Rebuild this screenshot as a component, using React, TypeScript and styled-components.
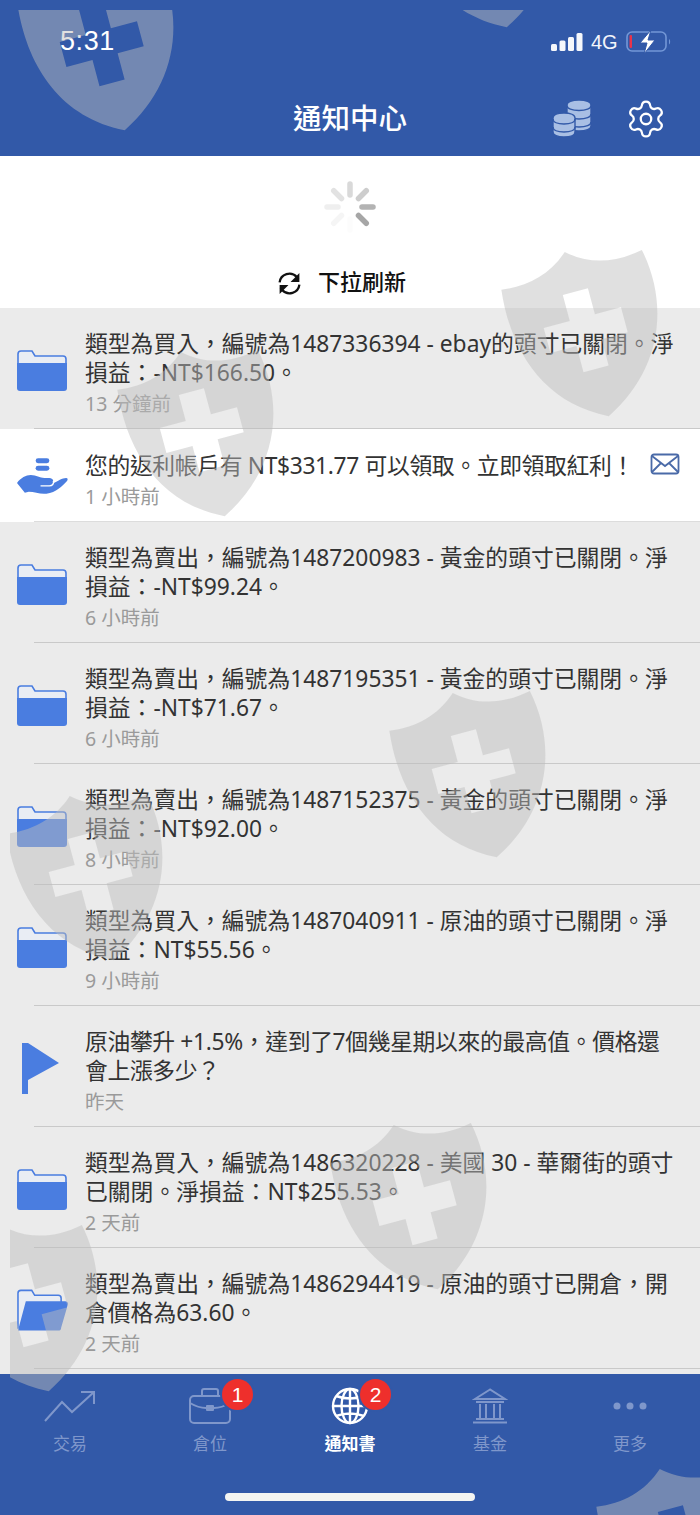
import * as React from "react";
import styled, { createGlobalStyle } from "styled-components";
import { Settings } from "lucide-react";

const GlobalStyle = createGlobalStyle`
  html, body {
    margin: 0;
    padding: 0;
    background: #ebebeb;
  }
  * {
    box-sizing: border-box;
  }
`;

const BLUE = "#3259a8";
const ICON_BLUE = "#4a7de0";
const TAB_MUTED = "#7f97cb";

const Page = styled.div`
  position: relative;
  width: 700px;
  height: 1515px;
  display: flex;
  flex-direction: column;
  overflow: hidden;
  font-family: "Liberation Sans", "Noto Sans CJK TC", sans-serif;
`;

const Header = styled.header`
  height: 156px;
  flex: none;
  background: ${BLUE};
  color: #fff;
  display: flex;
  flex-direction: column;
`;

const StatusBar = styled.div`
  height: 82px;
  padding: 22px 28px 0 60px;
  display: flex;
  justify-content: space-between;
  align-items: flex-start;
`;

const Clock = styled.span`
  font-size: 27px;
  line-height: 38px;
  letter-spacing: 0.6px;
`;

const StatusIcons = styled.div`
  display: flex;
  align-items: center;
  height: 40px;
  gap: 8px;
`;

const NetworkLabel = styled.span`
  font-size: 20px;
  width: 27px;
  color: #f2f5fb;
`;

const NavBar = styled.div`
  display: grid;
  grid-template-columns: 1fr auto 1fr;
  align-items: center;
  height: 72px;
  padding: 2px 33px 0;
`;

const Title = styled.h1`
  grid-column: 2;
  margin: 0;
  font-size: 28.5px;
  font-weight: 500;
  line-height: 70px;
`;

const NavActions = styled.div`
  grid-column: 3;
  justify-self: end;
  display: flex;
  align-items: center;
  gap: 33px;
`;

const RefreshPanel = styled.section`
  height: 152px;
  flex: none;
  background: #fff;
  display: flex;
  flex-direction: column;
  align-items: center;
`;

const SpinnerSlot = styled.div`
  height: 103px;
  padding-top: 23px;
`;

const PullHint = styled.div`
  display: flex;
  align-items: center;
  gap: 16px;
  margin-right: 17px;
  font-size: 22px;
  font-weight: 500;
  line-height: 48px;
  color: #111;
`;

const List = styled.div`
  flex: 1;
  min-height: 0;
  background: #ebebeb;
  display: flex;
  flex-direction: column;
`;

const Row = styled.article<{ $read: boolean }>`
  background: ${props => (props.$read ? "#ebebeb" : "#fff")};
`;

const RowBody = styled.div`
  min-height: 92px;
  display: grid;
  grid-template-columns: 51px 1fr auto;
  column-gap: 17px;
  align-items: center;
  padding: 21px 20px 10px 17px;
`;

const RowIcon = styled.div`
  display: flex;
  align-items: center;
  margin-top: -7px;
`;

const Message = styled.div`
  min-width: 0;
  color: #333;
  font-family: "Noto Sans", "Noto Sans CJK TC", sans-serif;
  font-size: 22.8px;
  line-height: 29px;
`;

const MessageLine = styled.div<{ $tight: boolean }>`
  white-space: nowrap;
  letter-spacing: ${props => (props.$tight ? "-0.35px" : "0")};
`;

const TimeAgo = styled.div`
  margin-top: 3px;
  color: #9a9a9a;
  font-size: 19.5px;
  line-height: 28px;
`;

const MailSlot = styled.div`
  align-self: start;
  margin-top: 3px;
`;

const Divider = styled.div<{ $light: boolean }>`
  height: 1px;
  margin-left: 34px;
  background: ${props => (props.$light ? "#dcdcdc" : "#c9c9c9")};
`;

const TabBar = styled.nav`
  height: 141px;
  flex: none;
  background: ${BLUE};
  display: flex;
  flex-direction: column;
  align-items: center;
`;

const Tabs = styled.div`
  width: 100%;
  display: grid;
  grid-template-columns: repeat(5, 140px);
`;

const Tab = styled.div<{ $active: boolean }>`
  height: 119px;
  padding-top: 10px;
  display: flex;
  flex-direction: column;
  align-items: center;
  font-size: 17px;
  font-weight: ${props => (props.$active ? 700 : 400)};
  color: ${props => (props.$active ? "#fff" : TAB_MUTED)};
`;

const TabIcon = styled.div`
  position: relative;
  height: 44px;
  display: flex;
  align-items: center;
  justify-content: center;
`;

const TabLabel = styled.span`
  margin-top: 5px;
  line-height: 24px;
`;

const Badge = styled.span`
  position: absolute;
  top: -5px;
  left: 100%;
  margin-left: -9px;
  width: 31px;
  height: 31px;
  border-radius: 50%;
  background: #ee2f2c;
  box-shadow: 0 0 0 2px ${BLUE};
  color: #fff;
  font-size: 21px;
  font-weight: 400;
  display: flex;
  align-items: center;
  justify-content: center;
`;

const HomeIndicator = styled.div`
  width: 250px;
  height: 8px;
  border-radius: 4px;
  background: #f4f5f2;
`;

// watermark sits over everything and is clipped 10px in from the top left
const Watermark = styled.div`
  position: absolute;
  top: 10px;
  left: 10px;
  right: 0;
  bottom: 0;
  overflow: hidden;
  pointer-events: none;
`;

const ShieldMark = styled.svg<{ $x: number; $y: number }>`
  position: absolute;
  width: 172px;
  height: 180px;
  left: ${props => props.$x - 90}px;
  top: ${props => props.$y - 100}px;
  transform-origin: 80px 90px;
  transform: rotate(-15deg);
  fill: rgba(189, 189, 189, 0.47);
`;

const shieldCentres = [
  [103, 49],
  [485, -54],
  [587, 335],
  [203, 435],
  [475, 776],
  [92, 879],
  [416, 1208],
  [27, 1310],
  [682, 1552]
];

const ClosedFolder = () => (
  <svg width="50" height="42" viewBox="0 0 50 42">
    <path
      d="M1 5a3 3 0 0 1 3-3h11l3 5h28a3 3 0 0 1 3 3v5H1z"
      fill="#e9edf4"
      stroke={ICON_BLUE}
      strokeWidth="1.6"
    />
    <path
      d="M0 14h50v25a3 3 0 0 1-3 3H3a3 3 0 0 1-3-3z"
      fill={ICON_BLUE}
    />
  </svg>
);

const OpenFolder = () => (
  <svg width="52" height="42" viewBox="0 0 52 42">
    <path
      d="M1 40V4a3 3 0 0 1 3-3h11l3 5h24a3 3 0 0 1 3 3v4"
      fill="#e9edf4"
      stroke={ICON_BLUE}
      strokeWidth="1.6"
    />
    <path d="M9 12h40a3 3 0 0 1 3 3l-7 24a3 3 0 0 1-3 3H1z" fill={ICON_BLUE} />
  </svg>
);

const FlagIcon = () => (
  <svg width="42" height="51" viewBox="0 0 42 51">
    <path d="M5 0h6l31 20L11 37v14H5z" fill={ICON_BLUE} />
  </svg>
);

const HandCoins = () => (
  <svg width="52" height="38" viewBox="0 0 52 38">
    <rect x="19" y="0" width="14" height="5" rx="2.5" fill={ICON_BLUE} />
    <rect x="19" y="7.5" width="14" height="5" rx="2.5" fill={ICON_BLUE} />
    <path
      d="M0 25C4 20 9 17 14 17C20 17 23 20 28 20H33C37 20 38 24 36 26C42 23 46 20 50 20C52 20 52 22 51 23C46 28 40 35 30 36C24 37 18 34 12 34L8 35Z"
      fill={ICON_BLUE}
    />
    <path d="M24 28h9c3 0 5-2 4-5" fill="none" stroke="#fff" strokeWidth="1.4" />
  </svg>
);

const MailIcon = () => (
  <svg width="30" height="22" viewBox="0 0 30 22" fill="none" stroke="#4a6aa8" strokeWidth="1.8">
    <rect x="1.5" y="1.5" width="27" height="19" rx="2.5" />
    <path d="M2 3l13 10L28 3M2 19l9-9M28 19l-9-9" />
  </svg>
);

const SignalBars = () => (
  <svg width="32" height="20" viewBox="0 0 32 20" fill="#f5f7fb">
    <rect x="0" y="12" width="6" height="7" rx="1.5" />
    <rect x="8.5" y="8.5" width="6" height="10.5" rx="1.5" />
    <rect x="17" y="5" width="6" height="14" rx="1.5" />
    <rect x="25.5" y="1" width="6" height="18" rx="1.5" />
  </svg>
);

const Battery = () => (
  <svg width="46" height="24" viewBox="0 0 46 24">
    <rect x="1" y="2" width="39" height="19" rx="5" fill="none" stroke="#7397d6" strokeWidth="1.6" />
    <rect x="3.5" y="5" width="2.5" height="13" rx="1" fill="#e8334a" />
    <path d="M43 9c1.5.6 1.5 4.8 0 5.4z" fill="#7397d6" />
    <path d="M25 0L14 13h7l-3 11 11-14h-7z" fill="#fff" stroke={BLUE} strokeWidth="1" />
  </svg>
);

const CoinsIcon = () => (
  <svg width="40" height="38" viewBox="0 0 40 38" fill="#a9bfe4" stroke={BLUE} strokeWidth="1.4">
    <path d="M15 5c0-3 5-5 12-5s12 2 12 5v21c0 3-5 5-12 5s-12-2-12-5z" />
    <path d="M15 5.500c0 3 5 5 12 5s12-2 12-5M15 14c0 3 5 5 12 5s12-2 12-5M15 22c0 3 5 5 12 5s12-2 12-5" fill="none" />
    <path d="M1 18c0-3 4.500-5 11-5s11 2 11 5v14c0 3-4.500 5-11 5S1 35 1 32z" />
    <path d="M1 19c0 3 4.500 5 11 5s11-2 11-5M1 27c0 3 4.500 5 11 5s11-2 11-5" fill="none" />
  </svg>
);

const RefreshIcon = () => (
  <svg width="25" height="25" viewBox="0 0 24 24" fill="none" stroke="#111" strokeWidth="2.2">
    <path d="M2.500 11A9.500 9.500 0 0 1 19 5.800l1.500 2" />
    <path d="M21.500 2v8.500H13z" fill="#111" stroke="none" />
    <path d="M21.500 13A9.500 9.500 0 0 1 5 18.200l-1.500-2" />
    <path d="M2.500 22v-8.500H11z" fill="#111" stroke="none" />
  </svg>
);

const Spinner = () => (
  <svg width="56" height="56" viewBox="-28 -28 56 56" strokeWidth="5.500" strokeLinecap="round">
    {[
      [0, "#d9d9d9"],
      [45, "#cdcdcd"],
      [90, "#b3b3b3"],
      [135, "#a6a6a6"],
      [180, "#fcfcfc"],
      [225, "#f5f5f5"],
      [270, "#efefef"],
      [315, "#e2e2e2"]
    ].map(([angle, colour]) => (
      <line
        key={angle}
        x1="0"
        y1="-12"
        x2="0"
        y2="-23"
        stroke={colour as string}
        transform={`rotate(${angle})`}
      />
    ))}
  </svg>
);

const TradeGlyph = () => (
  <svg width="52" height="32" viewBox="0 0 52 32" fill="none" stroke={TAB_MUTED} strokeWidth="2">
    <path d="M1 31L18 12l10 10L50 2M37 2h13v12" />
  </svg>
);

const CaseGlyph = () => (
  <svg width="42" height="36" viewBox="0 0 42 36" fill="none" stroke={TAB_MUTED} strokeWidth="2">
    <rect x="1" y="8" width="40" height="27" rx="4" />
    <path d="M13 8V3a2 2 0 0 1 2-2h12a2 2 0 0 1 2 2v5M1 15c5 3 10 5 16 5M25 20c6 0 11-2 16-5" />
    <rect x="17" y="17" width="8" height="6" rx="1" fill={TAB_MUTED} stroke="none" />
  </svg>
);

const GlobeGlyph = () => (
  <svg width="38" height="38" viewBox="0 0 38 38" fill="none" stroke="#fff" strokeWidth="2.4">
    <circle cx="19" cy="19" r="17" />
    <ellipse cx="19" cy="19" rx="8.500" ry="17" />
    <path d="M19 2v34M2 19h34M5 9Q19 14 33 9M5 29Q19 24 33 29" />
  </svg>
);

const BankGlyph = () => (
  <svg width="36" height="36" viewBox="0 0 36 36" fill="none" stroke={TAB_MUTED} strokeWidth="2">
    <path d="M18 1.500L3 11h30zM4 14h28M8 16v14M14 16v14M22 16v14M28 16v14M4 31h28M1 34.500h34" />
  </svg>
);

const MoreGlyph = () => (
  <svg width="36" height="10" viewBox="0 0 36 10" fill={TAB_MUTED}>
    <circle cx="5" cy="5" r="3.500" />
    <circle cx="18" cy="5" r="3.500" />
    <circle cx="31" cy="5" r="3.500" />
  </svg>
);

interface INotification {
  icon: React.ReactNode;
  lines: string[];
  time: string;
  unread?: boolean;
  mail?: boolean;
  tight?: boolean;
}

const notifications: INotification[] = [
  {
    icon: <ClosedFolder />,
    lines: ["類型為買入\uFF0C編號為1487336394 - ebay的頭寸已關閉。淨", "損益\uFF1A-NT$166.50。"],
    time: "13 分鐘前"
  },
  {
    icon: <HandCoins />,
    lines: ["您的返利帳戶有 NT$331.77 可以領取。立即領取紅利\uFF01"],
    time: "1 小時前",
    unread: true,
    mail: true,
    tight: true
  },
  {
    icon: <ClosedFolder />,
    lines: ["類型為賣出\uFF0C編號為1487200983 - 黃金的頭寸已關閉。淨", "損益\uFF1A-NT$99.24。"],
    time: "6 小時前"
  },
  {
    icon: <ClosedFolder />,
    lines: ["類型為賣出\uFF0C編號為1487195351 - 黃金的頭寸已關閉。淨", "損益\uFF1A-NT$71.67。"],
    time: "6 小時前"
  },
  {
    icon: <ClosedFolder />,
    lines: ["類型為賣出\uFF0C編號為1487152375 - 黃金的頭寸已關閉。淨", "損益\uFF1A-NT$92.00。"],
    time: "8 小時前"
  },
  {
    icon: <ClosedFolder />,
    lines: ["類型為買入\uFF0C編號為1487040911 - 原油的頭寸已關閉。淨", "損益\uFF1ANT$55.56。"],
    time: "9 小時前"
  },
  {
    icon: <FlagIcon />,
    lines: ["原油攀升 +1.5%\uFF0C達到了7個幾星期以來的最高值。價格還", "會上漲多少\uFF1F"],
    time: "昨天",
    tight: true
  },
  {
    icon: <ClosedFolder />,
    lines: ["類型為買入\uFF0C編號為1486320228 - 美國 30 - 華爾街的頭寸", "已關閉。淨損益\uFF1ANT$255.53。"],
    time: "2 天前"
  },
  {
    icon: <OpenFolder />,
    lines: ["類型為賣出\uFF0C編號為1486294419 - 原油的頭寸已開倉\uFF0C開", "倉價格為63.60。"],
    time: "2 天前"
  }
];

const tabs = [
  { label: "交易", glyph: <TradeGlyph /> },
  { label: "倉位", glyph: <CaseGlyph />, badge: 1 },
  { label: "通知書", glyph: <GlobeGlyph />, badge: 2, active: true },
  { label: "基金", glyph: <BankGlyph /> },
  { label: "更多", glyph: <MoreGlyph /> }
];

const App = () => (
  <Page>
    <GlobalStyle />
    <Header>
      <StatusBar>
        <Clock>5:31</Clock>
        <StatusIcons>
          <SignalBars />
          <NetworkLabel>4G</NetworkLabel>
          <Battery />
        </StatusIcons>
      </StatusBar>
      <NavBar>
        <Title>通知中心</Title>
        <NavActions>
          <CoinsIcon />
          <Settings size={42} strokeWidth={1.3} color="#fff" />
        </NavActions>
      </NavBar>
    </Header>
    <RefreshPanel>
      <SpinnerSlot>
        <Spinner />
      </SpinnerSlot>
      <PullHint>
        <RefreshIcon />
        下拉刷新
      </PullHint>
    </RefreshPanel>
    <List>
      {notifications.map((item, index) => (
        <Row key={index} $read={!item.unread}>
          <RowBody>
            <RowIcon>{item.icon}</RowIcon>
            <Message>
              {item.lines.map(line => (
                <MessageLine key={line} $tight={!!item.tight}>
                  {line}
                </MessageLine>
              ))}
              <TimeAgo>{item.time}</TimeAgo>
            </Message>
            {item.mail ? (
              <MailSlot>
                <MailIcon />
              </MailSlot>
            ) : null}
          </RowBody>
          <Divider $light={!!item.unread} />
        </Row>
      ))}
    </List>
    <TabBar>
      <Tabs>
        {tabs.map(tab => (
          <Tab key={tab.label} $active={!!tab.active}>
            <TabIcon>
              {tab.glyph}
              {tab.badge ? <Badge>{tab.badge}</Badge> : null}
            </TabIcon>
            <TabLabel>{tab.label}</TabLabel>
          </Tab>
        ))}
      </Tabs>
      <HomeIndicator />
    </TabBar>
    <Watermark>
      {shieldCentres.map(([x, y]) => (
        <ShieldMark key={`${x}-${y}`} $x={x} $y={y} viewBox="0 0 172 180">
          <path
            fillRule="evenodd"
            d="M80 4C60 22 35 28 9 24C2 85 20 145 80 174C140 145 168 85 155 22C125 28 100 22 80 4ZM67 45H93V72H120V98H93V125H67V98H40V72H67Z"
          />
        </ShieldMark>
      ))}
    </Watermark>
  </Page>
);

export default App;
